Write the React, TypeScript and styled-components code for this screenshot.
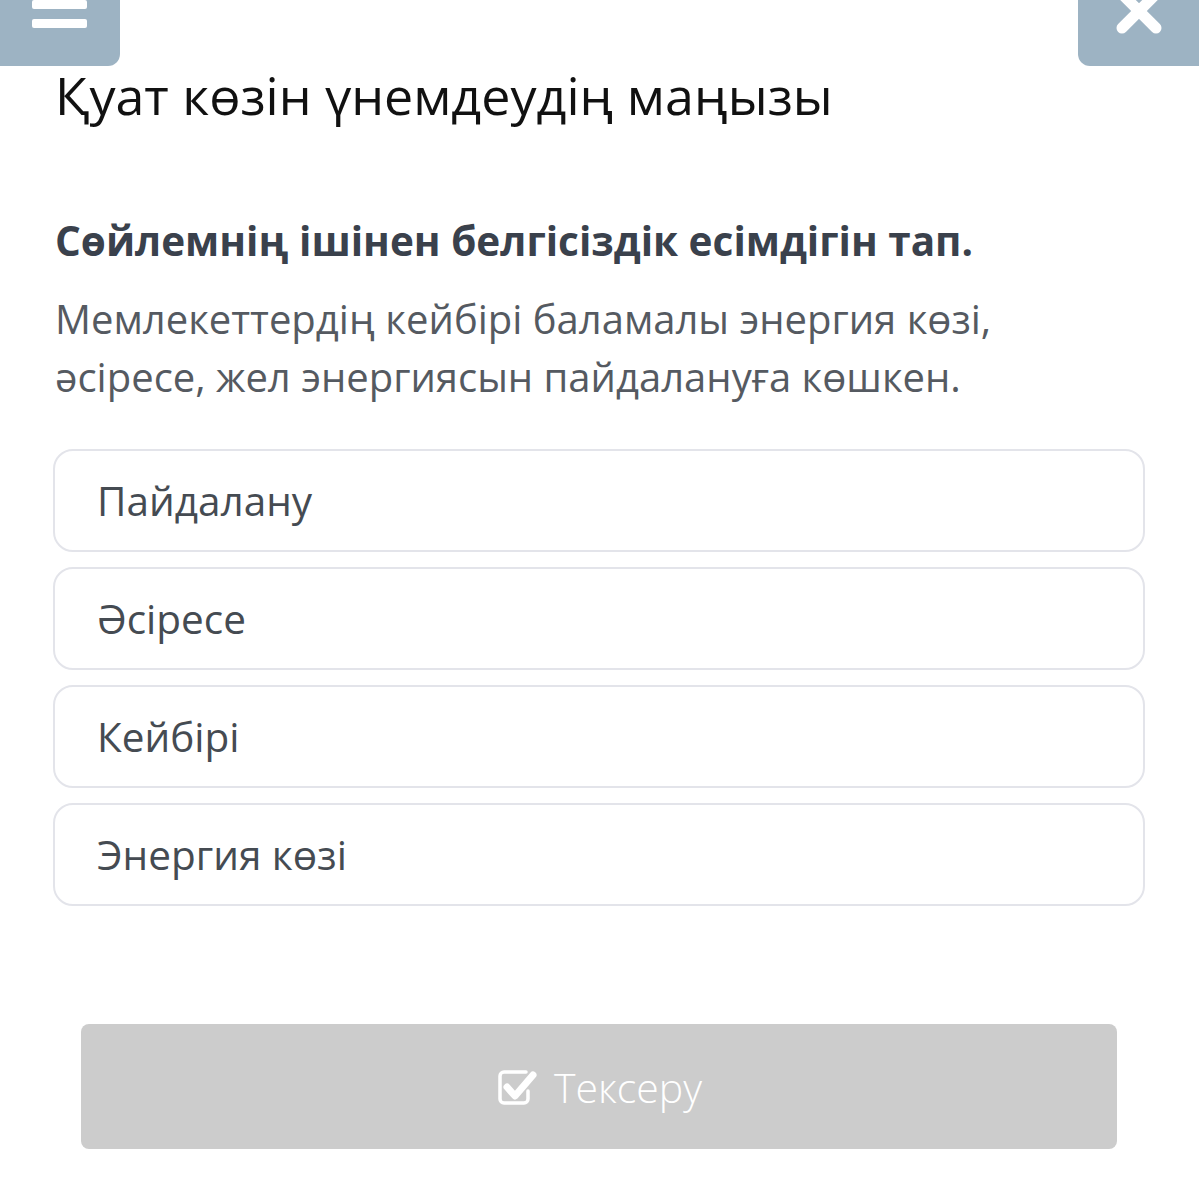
import React from "react";
import styled, { createGlobalStyle } from "styled-components";

const Global = createGlobalStyle`
  html, body { margin: 0; padding: 0; background: #ffffff; }
  body { font-family: "Open Sans", "Noto Sans", sans-serif; }
  * { box-sizing: border-box; }
`;

const Page = styled.div`
  width: 1199px;
  min-height: 1200px;
  background: #fff;
`;

const TopBar = styled.div`
  display: flex;
  justify-content: space-between;
  height: 66px;
`;

const CornerButton = styled.div<{ $side: "left" | "right"; $w: number }>`
  width: ${(p) => p.$w}px;
  height: 66px;
  background: #9db3c3;
  border-radius: ${(p) => (p.$side === "left" ? "0 0 12px 0" : "0 0 0 12px")};
  position: relative;
  overflow: hidden;
`;

const Bars = styled.div`
  position: absolute;
  left: 32px;
  top: 0;
  width: 55px;
  display: flex;
  flex-direction: column;
  gap: 10px;
`;

const Bar = styled.span`
  display: block;
  height: 9px;
  background: #fff;
  border-radius: 2px;
`;

const CloseIcon = styled.svg`
  position: absolute;
  left: 36px;
  top: -14px;
`;

const Content = styled.div`
  padding: 0 54px 0 53px;
`;

const Title = styled.h1`
  margin: 0;
  padding-left: 2px;
  font-size: 52px;
  line-height: 62px;
  font-weight: 400;
  color: #111111;
  margin-top: -2px;
`;

const Question = styled.h2`
  margin: 89px 0 0;
  padding-left: 2px;
  font-size: 40.5px;
  line-height: 52px;
  font-weight: 700;
  color: #3a414c;
`;

const Sentence = styled.p`
  margin: 23px 0 0;
  padding-left: 2px;
  font-size: 40px;
  line-height: 58px;
  font-weight: 400;
  color: #555a61;
`;

const Options = styled.div`
  margin-top: 43px;
  display: flex;
  flex-direction: column;
  gap: 15px;
`;

const Option = styled.div`
  height: 103px;
  border: 2px solid #e3e4ea;
  border-radius: 20px;
  display: flex;
  align-items: center;
  padding-left: 42px;
  font-size: 40.5px;
  color: #454b52;
`;

const CheckButton = styled.div`
  margin: 118px 28px 0;
  height: 125px;
  background: #cccccc;
  border-radius: 8px;
  display: flex;
  align-items: center;
  justify-content: center;
  gap: 14px;
  color: #ffffff;
  font-size: 41px;
  font-weight: 300;
`;

const options = ["Пайдалану", "Әсіресе", "Кейбірі", "Энергия көзі"];

export default function App() {
  return (
    <Page>
      <Global />
      <TopBar>
        <CornerButton $side="left" $w={120}>
          <Bars>
            <Bar />
            <Bar />
          </Bars>
        </CornerButton>
        <CornerButton $side="right" $w={121}>
          <CloseIcon width="50" height="50" viewBox="0 0 50 50">
            <path d="M8 8 L42 42 M42 8 L8 42" stroke="#fff" strokeWidth="11" strokeLinecap="round" />
          </CloseIcon>
        </CornerButton>
      </TopBar>
      <Content>
        <Title>Қуат көзін үнемдеудің маңызы</Title>
        <Question>Сөйлемнің ішінен белгісіздік есімдігін тап.</Question>
        <Sentence>
          Мемлекеттердің кейбірі баламалы энергия көзі,
          <br />
          әсіресе, жел энергиясын пайдалануға көшкен.
        </Sentence>
        <Options>
          {options.map((o) => (
            <Option key={o}>{o}</Option>
          ))}
        </Options>
        <CheckButton>
          <svg width="44" height="40" viewBox="0 0 44 40">
            <path
              d="M30 5 H8 a4 4 0 0 0 -4 4 V32 a4 4 0 0 0 4 4 H28 a4 4 0 0 0 4 -4 V24"
              fill="none"
              stroke="#fff"
              strokeWidth="3.5"
              strokeLinecap="round"
            />
            <path d="M11 20 L19 29 L37 8" fill="none" stroke="#fff" strokeWidth="7" strokeLinecap="round" strokeLinejoin="round" />
          </svg>
          <span>Тексеру</span>
        </CheckButton>
      </Content>
    </Page>
  );
}
